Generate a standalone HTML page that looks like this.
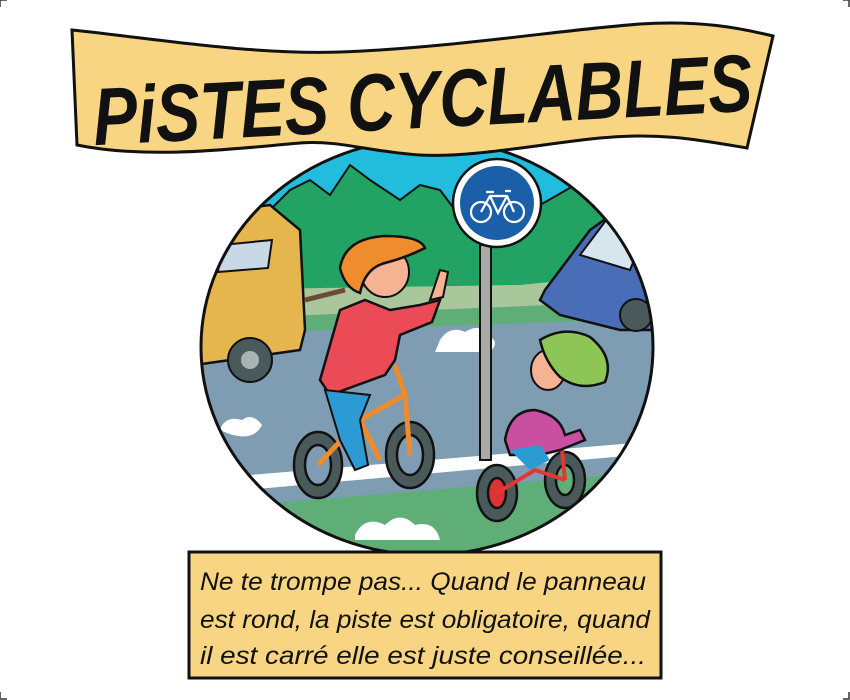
<!DOCTYPE html>
<html><head><meta charset="utf-8"><style>
html,body{margin:0;padding:0;background:#fff;}
svg{display:block}
</style></head><body>
<svg width="850" height="700" viewBox="0 0 850 700" xmlns="http://www.w3.org/2000/svg">
<rect width="850" height="700" fill="#fff"/>
<path d="M0 692V699H7M843 699H849V692M0 7V0H7M843 0H849V7" stroke="#333" stroke-width="1.5" fill="none"/>
<defs><clipPath id="c"><ellipse cx="427" cy="347" rx="226" ry="208"/></clipPath></defs>
<g clip-path="url(#c)">
<rect x="190" y="130" width="480" height="430" fill="#22bcdc"/>
<path d="M190 225 L260 220 290 190 310 180 330 195 350 165 370 180 400 200 420 185 440 190 455 210 480 210 540 205 575 185 605 200 630 215 670 220 V560 H190Z" fill="#22a263" stroke="#111" stroke-width="2"/>
<path d="M190 290 L520 285 620 275 670 275 V560 H190Z" fill="#a9c79b"/>
<path d="M190 320 L670 300 V560 H190Z" fill="#5fae78"/>
<path d="M190 335 L670 318 V475 L190 510Z" fill="#7f9db2"/>
<path d="M190 480 L670 440 V452 L190 495Z" fill="#fff"/>
<path d="M190 510 L670 470 V560 H190Z" fill="#5fae78"/>
<!-- van -->
<path d="M195 215 L270 205 300 230 305 330 300 350 195 365Z" fill="#e6b64e" stroke="#111" stroke-width="2.5"/>
<path d="M222 245 L272 240 268 268 218 272Z" fill="#c9d8e6" stroke="#111" stroke-width="2"/>
<circle cx="250" cy="360" r="22" fill="#4a5a5a" stroke="#111" stroke-width="2"/>
<circle cx="250" cy="360" r="9" fill="#a8b4b4"/>
<!-- blue car -->
<path d="M545 290 L590 230 625 205 670 200 V330 L620 330 560 315 540 300Z" fill="#4a6db7" stroke="#111" stroke-width="2.5"/>
<path d="M580 255 L610 215 640 245 630 270Z" fill="#d6e6ef" stroke="#111" stroke-width="2"/>
<circle cx="636" cy="315" r="16" fill="#4a5a5a" stroke="#111" stroke-width="2"/>
<!-- clouds -->
<path d="M440 340 q10-15 25-8 q15-10 25 5 q10 5 0 15 h-55z" fill="#fff"/>
<path d="M220 430 q5-15 22-10 q10-8 20 5 q-10 20-42 5z" fill="#fff"/>
<path d="M355 535 q10-20 30-10 q15-15 30 0 q20-5 25 15 h-85z" fill="#fff"/>
<!-- sign pole -->
<rect x="480" y="245" width="11" height="215" fill="#a8aaa8" stroke="#111" stroke-width="2"/>
<circle cx="497" cy="203" r="44" fill="#fff" stroke="#111" stroke-width="2.5"/>
<circle cx="497" cy="203" r="37" fill="#1b5fa9"/>
<g stroke="#fff" stroke-width="2.2" fill="none"><circle cx="481" cy="212" r="10"/><circle cx="514" cy="212" r="10"/><path d="M481 212 L490 196 L507 196 L514 212 M490 196 L498 213 L507 196 M486 192h8 M505 191h6"/></g>
<!-- woman bike -->
<g stroke="#111" stroke-width="2.5">
<ellipse cx="318" cy="465" rx="24" ry="33" fill="#4a5a5a"/><ellipse cx="318" cy="465" rx="13" ry="20" fill="#7f9db2"/>
<ellipse cx="410" cy="455" rx="24" ry="33" fill="#4a5a5a"/><ellipse cx="410" cy="455" rx="13" ry="20" fill="#7f9db2"/>
</g>
<path d="M318 465 L360 420 L405 395 L410 455 M360 420 L380 460 M405 395 L395 365" stroke="#ef8b2a" stroke-width="5" fill="none"/>
<path d="M320 380 L340 310 365 300 390 310 420 305 440 300 432 322 400 335 395 360 385 375 330 395Z" fill="#ea4b57" stroke="#111" stroke-width="2.5"/>
<path d="M325 390 L340 440 355 470 368 465 360 420 370 395Z" fill="#2c9bd3" stroke="#111" stroke-width="2"/>
<ellipse cx="385" cy="272" rx="24" ry="25" fill="#f6b393" stroke="#111" stroke-width="2"/>
<path d="M340 268 q5-30 45-32 q35 0 40 12 q-20 10-40 15 q-20 5-25 30 q-15-5-20-25z" fill="#ee8c2e" stroke="#111" stroke-width="2.5"/>
<path d="M305 300 L345 290" stroke="#6b4a36" stroke-width="5"/>
<path d="M430 300 l10-30 8 2 -5 25z" fill="#f6b393" stroke="#111" stroke-width="2"/>
<!-- child -->
<g stroke="#111" stroke-width="2.5">
<ellipse cx="497" cy="493" rx="20" ry="28" fill="#4a5a5a"/><ellipse cx="497" cy="493" rx="9" ry="15" fill="#d33"/>
<ellipse cx="565" cy="480" rx="20" ry="28" fill="#4a5a5a"/><ellipse cx="565" cy="480" rx="9" ry="15" fill="#5fae78"/>
</g>
<path d="M497 493 L535 470 L565 480 M560 430 L565 480" stroke="#e53636" stroke-width="4" fill="none"/>
<path d="M505 440 q5-30 30-30 q25 5 30 25 l15 -5 5 10 -25 10 -20 5 -30 0z" fill="#c94fa0" stroke="#111" stroke-width="2.5"/>
<path d="M510 450 L530 470 550 460 540 445z" fill="#2c9bd3"/>
<ellipse cx="548" cy="370" rx="17" ry="20" fill="#f6b393" stroke="#111" stroke-width="2"/>
<path d="M540 340 q25-15 50-3 q25 20 15 45 q-25 10-45-5 q-15-15-20-37z" fill="#8dc657" stroke="#111" stroke-width="2.5"/>
</g>
<ellipse cx="427" cy="347" rx="226" ry="208" fill="none" stroke="#111" stroke-width="3"/>
<!-- banner -->
<path d="M72 30 C150 38 250 55 340 52 C450 48 560 30 640 24 C700 20 740 28 773 36 L747 148 C700 140 660 132 600 138 C540 144 470 158 420 155 C370 152 340 140 300 143 C240 148 150 160 77 145 Z" fill="#f8d583" stroke="#111" stroke-width="3"/>
<g transform="rotate(-3 420 90)">
<text x="0" y="0" font-family="Liberation Sans, sans-serif" font-weight="bold" font-style="italic" font-size="58" fill="#111" textLength="660" lengthAdjust="spacingAndGlyphs" transform="translate(92 128) scale(1 1.4)">PiSTES CYCLABLES</text>
</g>
<!-- caption -->
<rect x="189" y="552" width="472" height="126" fill="#f8d583" stroke="#111" stroke-width="3"/>
<g font-family="Liberation Sans, sans-serif" font-style="italic" font-size="25" fill="#111">
<text x="200" y="590" textLength="446" lengthAdjust="spacingAndGlyphs">Ne te trompe pas... Quand le panneau</text>
<text x="200" y="628" textLength="450" lengthAdjust="spacingAndGlyphs">est rond, la piste est obligatoire, quand</text>
<text x="200" y="664" textLength="446" lengthAdjust="spacingAndGlyphs">il est carré elle est juste conseillée...</text>
</g>
</svg>
</body></html>
